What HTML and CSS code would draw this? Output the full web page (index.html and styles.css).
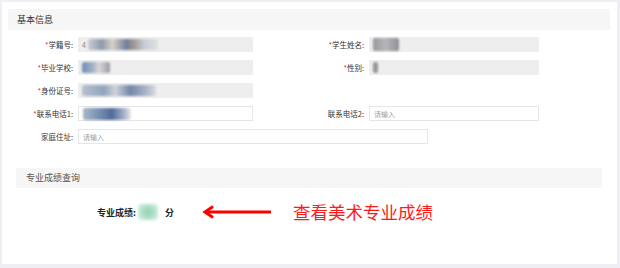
FILE: index.html
```html
<!DOCTYPE html>
<html lang="zh">
<head>
<meta charset="utf-8">
<link rel="stylesheet" href="styles.css">
</head>
<body>
<div class="card">
  <div class="section-head">基本信息</div>
  <div class="form">
    <label class="lbl"><i>*</i>学籍号:</label>
    <div class="field ro"><span class="digit">4</span><span class="blob b1"></span></div>
    <label class="lbl"><i>*</i>学生姓名:</label>
    <div class="field ro"><span class="blob b2"></span></div>

    <label class="lbl"><i>*</i>毕业学校:</label>
    <div class="field ro"><span class="blob b3"></span></div>
    <label class="lbl"><i>*</i>性别:</label>
    <div class="field ro"><span class="blob b4"></span></div>

    <label class="lbl"><i>*</i>身份证号:</label>
    <div class="field ro"><span class="blob b5"></span></div>
    <span></span><span></span>

    <label class="lbl"><i>*</i>联系电话1:</label>
    <div class="field ed"><span class="blob b6"></span></div>
    <label class="lbl">联系电话2:</label>
    <div class="field ed"><span class="ph">请输入</span></div>

    <label class="lbl">家庭住址:</label>
    <div class="field ed wide"><span class="ph">请输入</span></div>
  </div>

  <div class="section-head sub">专业成绩查询</div>
  <div class="score">
    <span class="score-lbl">专业成绩:</span>
    <span class="blob green"></span>
    <span class="score-lbl unit">分</span>
    <svg class="arrow" width="70" height="14" viewBox="0 0 70 14">
      <path d="M4 7 H69" stroke="#f00" stroke-width="3" fill="none"/>
      <path d="M11 1.5 L3 7 L11 12.5" stroke="#f00" stroke-width="3" fill="none" stroke-linejoin="miter"/>
    </svg>
    <span class="note">查看美术专业成绩</span>
  </div>
</div>
</body>
</html>
```

FILE: styles.css
```css
html, body {
  margin: 0;
  padding: 0;
}
body {
  background: #eeeef4;
  font-family: "Noto Sans CJK SC", "Noto Sans", sans-serif;
  color: #333;
  width: 620px;
  height: 268px;
  overflow: hidden;
}
.card {
  margin: 2px 3px 0 2px;
  height: 262px;
  background: #fff;
  padding: 7px 7px 0 6px;
  box-sizing: border-box;
}
.section-head {
  height: 21px;
  line-height: 21px;
  background: #f6f6f6;
  padding-left: 9px;
  font-size: 9px;
  color: #333;
}
.section-head.sub {
  margin: 24px 8px 0 8px;
  height: 20px;
  line-height: 20px;
  padding-left: 10px;
  color: #555;
}
.form {
  display: grid;
  grid-template-columns: 65px 175px 106px 170px;
  grid-auto-rows: 15px;
  column-gap: 5px;
  row-gap: 8px;
  padding-top: 7px;
}
.lbl {
  font-size: 7.5px;
  text-align: right;
  line-height: 15px;
  color: #333;
  white-space: nowrap;
}
.lbl i {
  font-style: normal;
  color: #e0242b;
}
.field {
  height: 15px;
  box-sizing: border-box;
  display: flex;
  align-items: center;
  padding-left: 4px;
}
.field.ro {
  background: #eeeeee;
}
.field.ed {
  background: #fff;
  border: 1px solid #e6e6e6;
}
.field.wide {
  grid-column: 2 / span 3;
  width: 350px;
}
.ph {
  font-size: 7px;
  color: #a0a0a0;
}
.digit {
  font-size: 7px;
  color: #888;
  margin-right: 2px;
}
.blob {
  display: inline-block;
  height: 11px;
  filter: blur(1.2px);
  border-radius: 2px;
}
.b1 {
  width: 70px;
  background: linear-gradient(90deg, #c9cdd6 0%, #8f9aa8 20%, #d7d2c8 35%, #6f7f9a 55%, #a29590 65%, #c7ccd6 80%, #e0e0e2 100%);
}
.b2 {
  width: 26px;
  height: 13px;
  background: linear-gradient(90deg, #9a9aa0, #b7b5b8 50%, #8d8d95);
}
.b3 {
  width: 28px;
  background: linear-gradient(90deg, #6f8fb8 0%, #a7b3c4 40%, #d9d9dc 60%, #9b9ba3 100%);
}
.b4 {
  width: 5px;
  background: #9a9598;
}
.b5 {
  width: 74px;
  background: linear-gradient(90deg, #b6c0cf 0%, #92a4bd 30%, #cfd3da 45%, #7387a8 65%, #a6b2c6 85%, #d8dce2 100%);
}
.b6 {
  width: 48px;
  height: 12px;
  background: linear-gradient(90deg, #a9b8cc 0%, #6d86ad 40%, #4f6b99 60%, #a3b1c7 85%, #e6e9ee 100%);
}
.score {
  display: flex;
  align-items: center;
  height: 20px;
  margin-top: 14px;
  padding-left: 89px;
}
.score-lbl {
  font-size: 9px;
  font-weight: bold;
  color: #222;
}
.blob.green {
  width: 20px;
  height: 16px;
  margin-left: 2px;
  background: radial-gradient(circle, #8fd1b0 0%, #b9e4cf 60%, #e4f4ec 100%);
  filter: blur(1.5px);
}
.unit {
  margin-left: 7px;
}
.arrow {
  margin-left: 28px;
  display: block;
}
.note {
  margin-left: 21px;
  font-size: 17.5px;
  color: #ff1a1a;
  line-height: 20px;
}
```
